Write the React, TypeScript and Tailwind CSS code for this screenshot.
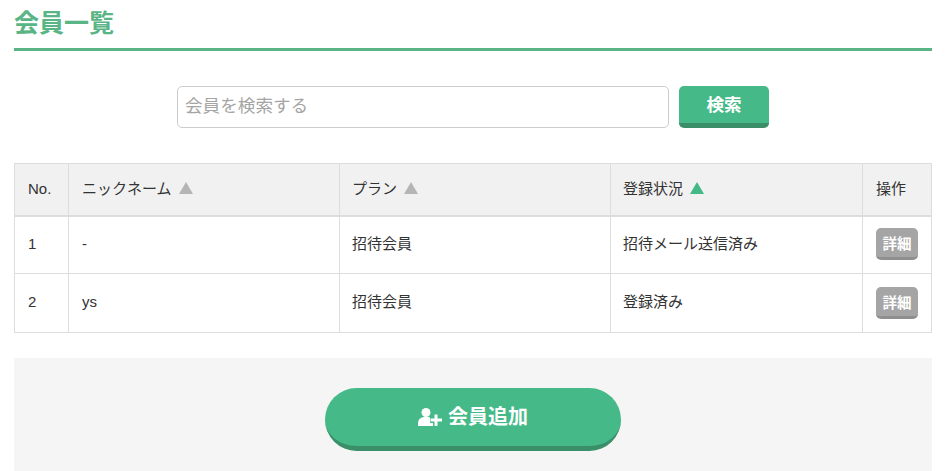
const members = [
  { no: 1, name: "-", plan: "招待会員", status: "招待メール送信済み" },
  { no: 2, name: "ys", plan: "招待会員", status: "登録済み" },
];

function Arrow({ active }: { active?: boolean }) {
  return (
    <span
      className={`inline-block w-0 h-0 ml-[7px] border-x-[7px] border-x-transparent border-b-[12px] ${
        active ? "border-b-[#43b986]" : "border-b-[#b5b5b5]"
      }`}
    />
  );
}

function UserPlusIcon() {
  return (
    <svg width="24" height="18" viewBox="0 0 24 18" className="shrink-0">
      <circle cx="8" cy="4.5" r="4.5" fill="#fff" />
      <path d="M0 18v-3a6 6 0 0 1 6-6h4a6 6 0 0 1 6 6v3z" fill="#fff" />
      <path d="M12 12h12M18 6v12" stroke="#45b987" strokeWidth="6" />
      <path d="M12.5 12h11.5M18 6.5v11.5" stroke="#fff" strokeWidth="3" />
    </svg>
  );
}

export default function App() {
  return (
    <div className="w-[950px] h-[471px] overflow-hidden bg-white text-[#333] font-['Liberation_Sans','Noto_Sans_CJK_JP',sans-serif]">
      <div className="mx-[14px] w-[918px]">
        {/* Title */}
        <h1 className="h-[51px] pt-[5px] border-b-[3px] border-[#5ab586] text-[25px] leading-[36px] font-bold text-[#5ab586]">
          会員一覧
        </h1>

        {/* Search */}
        <div className="flex justify-center gap-[10px] mt-[35px]">
          <input
            placeholder="会員を検索する"
            className="w-[492px] h-[42px] px-[7px] pb-[2px] border border-[#ccc] rounded-[5px] text-[17.6px] outline-none placeholder:text-[#a5a5a5]"
          />
          <button className="w-[90px] h-[42px] pt-[2px] rounded-[5px] bg-[#45b987] border-b-[5px] border-[#3a8f69] text-white text-[17.6px] font-bold">
            検索
          </button>
        </div>

        {/* Table */}
        <table className="w-[917px] mt-[35px] table-fixed border-collapse text-[15px]">
          <colgroup>
            <col className="w-[54px]" />
            <col className="w-[271px]" />
            <col className="w-[271px]" />
            <col className="w-[252px]" />
            <col className="w-[69px]" />
          </colgroup>
          <thead>
            <tr className="h-[52px] bg-[#f1f1f1] border-b-[2px] border-[#ddd] text-left">
              <th className="border border-[#ddd] border-b-[2px] pl-[13px] font-normal">No.</th>
              <th className="border border-[#ddd] border-b-[2px] pl-[13px] font-normal">
                ニックネーム
                <Arrow />
              </th>
              <th className="border border-[#ddd] border-b-[2px] pl-[12px] font-normal">
                プラン
                <Arrow />
              </th>
              <th className="border border-[#ddd] border-b-[2px] pl-[12px] font-normal">
                登録状況
                <Arrow active />
              </th>
              <th className="border border-[#ddd] border-b-[2px] pl-[13px] font-normal">操作</th>
            </tr>
          </thead>
          <tbody>
            {members.map((m) => (
              <tr key={m.no} className={m.no === 1 ? "h-[58px]" : "h-[59px]"}>
                <td className="border border-[#ddd] pl-[13px] pb-[2px]">{m.no}</td>
                <td className="border border-[#ddd] pl-[13px] pb-[2px]">{m.name}</td>
                <td className="border border-[#ddd] pl-[12px] pb-[2px]">{m.plan}</td>
                <td className="border border-[#ddd] pl-[12px] pb-[2px]">{m.status}</td>
                <td className={`border border-[#ddd] pl-[13px] ${m.no === 1 ? "pb-[2px]" : ""}`}>
                  <button className="block w-[42px] h-[32px] pt-[3px] leading-none rounded-[5px] bg-[#a5a5a5] border-b-[3px] border-[#8f8f8f] text-white text-[14.5px] font-bold">
                    詳細
                  </button>
                </td>
              </tr>
            ))}
          </tbody>
        </table>

        {/* Add member */}
        <div className="flex justify-center mt-[25px] h-[113px] pt-[30px] bg-[#f5f5f5]">
          <button className="flex items-center justify-center gap-[6px] w-[296px] h-[63px] rounded-full bg-[#45b987] border-b-[5px] border-[#3a8f69] text-white text-[20px] font-bold">
            <UserPlusIcon />
            会員追加
          </button>
        </div>
      </div>
    </div>
  );
}
